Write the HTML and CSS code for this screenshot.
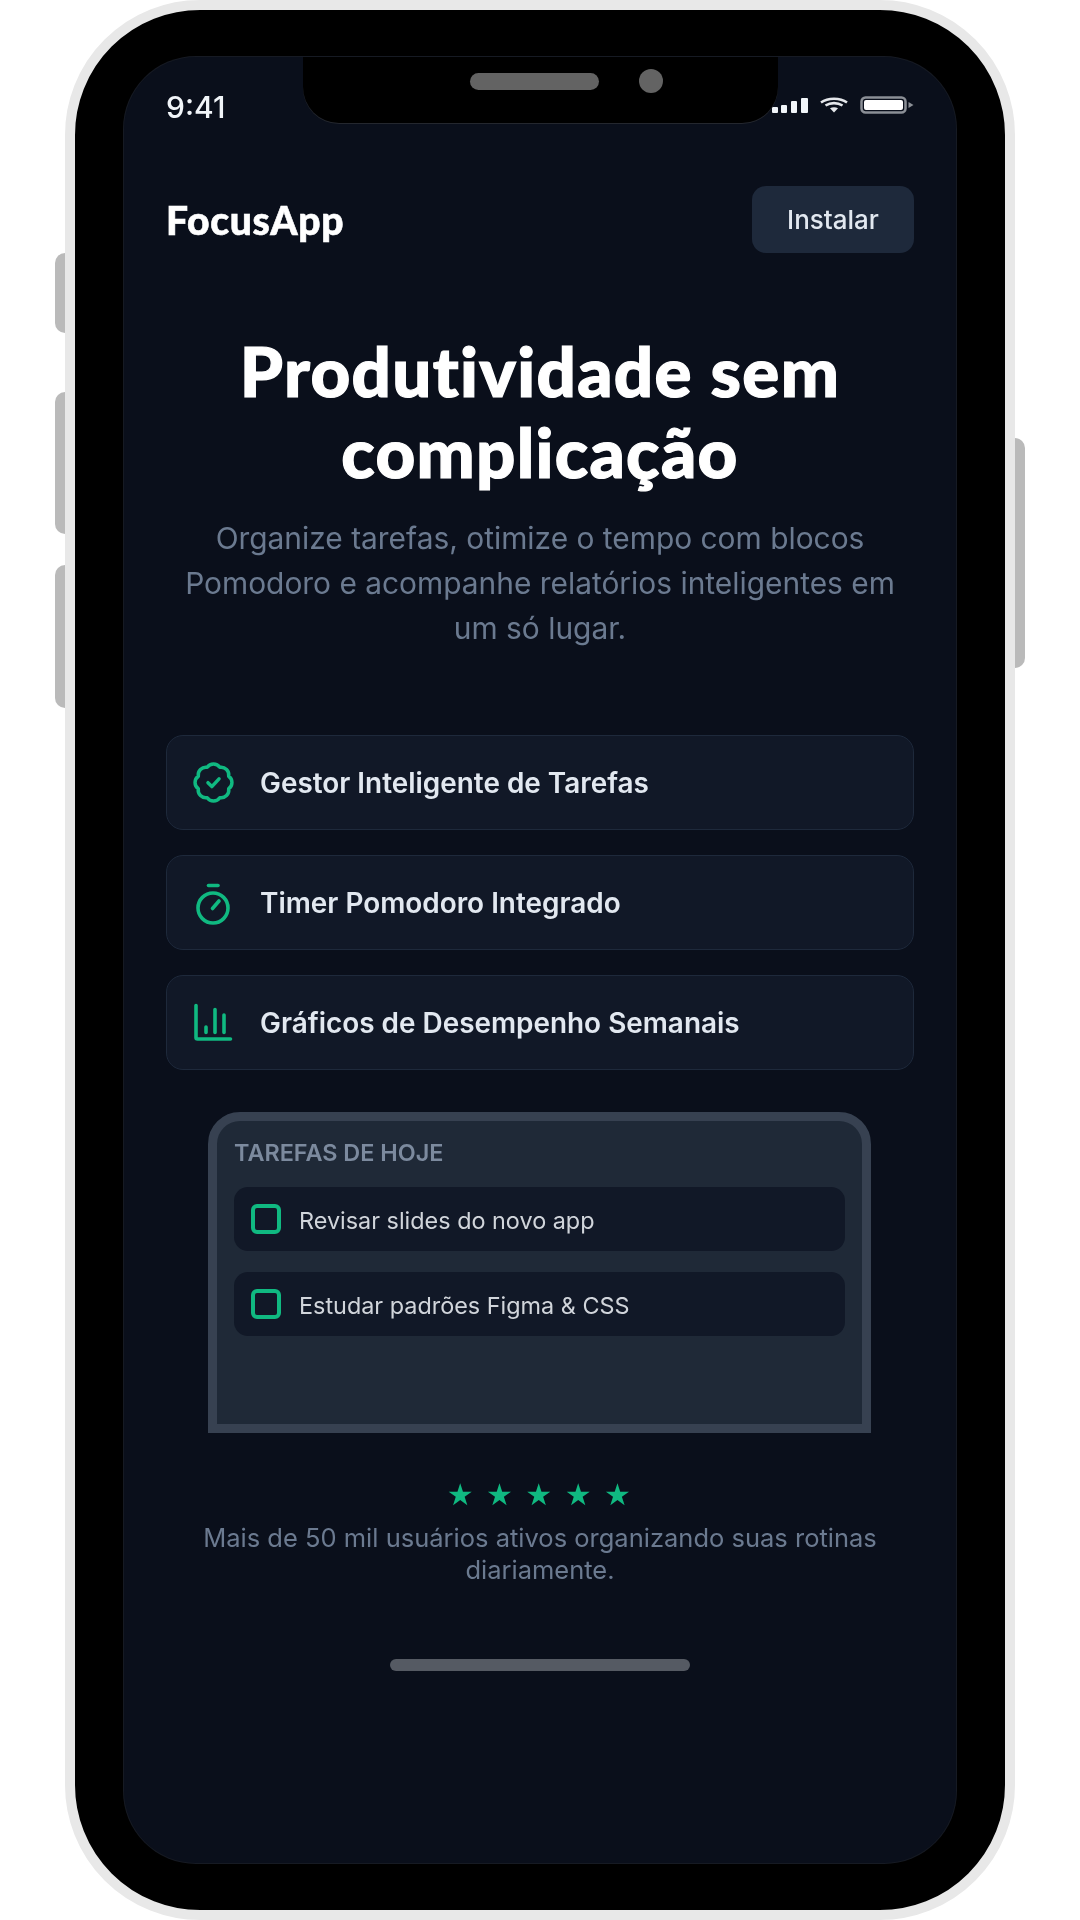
FILE: index.html
```html
<!DOCTYPE html>
<html lang="pt-BR">
<head>
<meta charset="utf-8">
<title>FocusApp</title>
<link rel="stylesheet" href="styles.css">
</head>
<body>
<div class="phone">
  <span class="side side-l1"></span>
  <span class="side side-l2"></span>
  <span class="side side-l3"></span>
  <span class="side side-r1"></span>
  <div class="screen">
    <div class="notch"><span class="speaker"></span><span class="camera"></span></div>
    <div class="content">
      <div class="status">
        <span class="time">9:41</span>
        <div class="status-icons">
          <svg class="sig" width="36" height="15" viewBox="0 0 36 15"><rect x="0" y="9" width="6" height="6" rx="1"/><rect x="9" y="7" width="6" height="8" rx="1"/><rect x="19" y="3" width="6" height="12" rx="1"/><rect x="29" y="0" width="7" height="15" rx="1"/></svg>
          <svg class="wifi" width="28" height="16" viewBox="0 0 28 16"><path d="M1 5.500C8 .5 20 .5 27 5.500M5.500 8.500c5-3.200 12-3.200 17 0" fill="none" stroke="#e5e7eb" stroke-width="2.600"/><path d="M10 11.200c2.400-1.400 5.600-1.400 8 0L14 15.500Z" fill="#e5e7eb"/></svg>
          <svg class="bat" width="54" height="18" viewBox="0 0 54 18"><rect x="1.500" y="1.500" width="44" height="15" rx="4" fill="none" stroke="#8b8f96" stroke-width="2.500"/><rect x="4" y="4" width="39" height="10" rx="2" fill="#fff"/><path d="M48.500 6l5 3-5 3z" fill="#8b8f96"/></svg>
        </div>
      </div>
      <header class="top">
        <span class="logo">FocusApp</span>
        <span class="install">Instalar</span>
      </header>
      <h1 class="title">Produtividade sem complicação</h1>
      <p class="lead">Organize tarefas, otimize o tempo com blocos Pomodoro e acompanhe relatórios inteligentes em um só lugar.</p>
      <div class="features">
        <div class="feature">
          <span class="ico-box"><svg width="41" height="41" viewBox="2 2 20 20" fill="none" stroke="#10b981" stroke-width="1.700" stroke-linecap="round" stroke-linejoin="round"><path d="M9.300 12.100 11.200 14 14.700 10.200"/><path d="M21 12c0 1.268-.63 2.39-1.593 3.068a3.745 3.745 0 0 1-1.043 3.296 3.745 3.745 0 0 1-3.296 1.043A3.745 3.745 0 0 1 12 21c-1.268 0-2.39-.63-3.068-1.593a3.746 3.746 0 0 1-3.296-1.043 3.745 3.745 0 0 1-1.043-3.296A3.745 3.745 0 0 1 3 12c0-1.268.63-2.39 1.593-3.068a3.745 3.745 0 0 1 1.043-3.296 3.746 3.746 0 0 1 3.296-1.043A3.746 3.746 0 0 1 12 3c1.268 0 2.39.63 3.068 1.593a3.746 3.746 0 0 1 3.296 1.043 3.746 3.746 0 0 1 1.043 3.296A3.745 3.745 0 0 1 21 12Z"/></svg></span>
          <span>Gestor Inteligente de Tarefas</span>
        </div>
        <div class="feature">
          <span class="ico-box"><svg width="44" height="44" viewBox="0 0 44 44" fill="none" stroke="#10b981" stroke-width="3.600" stroke-linecap="round"><path d="M17.500 4.500H27"/><circle cx="22" cy="27" r="15"/><path d="M21.500 27.500 28 20"/></svg></span>
          <span>Timer Pomodoro Integrado</span>
        </div>
        <div class="feature">
          <span class="ico-box"><svg width="44" height="44" viewBox="0 0 44 44" fill="none" stroke="#10b981" stroke-width="3.600" stroke-linecap="round" stroke-linejoin="round"><path d="M5 4.500V36.500a1.500 1.500 0 0 0 1.500 1.500H39.500"/><path d="M15 26V31.500M24 8.500V31.500M33 14V31.500"/></svg></span>
          <span>Gráficos de Desempenho Semanais</span>
        </div>
      </div>
      <section class="preview">
        <div class="preview-title">TAREFAS DE HOJE</div>
        <div class="task"><span class="check"></span><span>Revisar slides do novo app</span></div>
        <div class="task"><span class="check"></span><span>Estudar padrões Figma &amp; CSS</span></div>
      </section>
      <div class="stars">★★★★★</div>
      <p class="social">Mais de 50 mil usuários ativos organizando suas rotinas diariamente.</p>
      <div class="home"></div>
    </div>
  </div>
</div>
</body>
</html>
```
FILE: styles.css
```css
* { box-sizing: border-box; }
html, body { margin: 0; padding: 0; background: #fff; }
body { width: 1080px; height: 1920px; overflow: hidden; font-family: Inter, "Liberation Sans", sans-serif; }

.phone {
  position: relative;
  width: 950px;
  height: 1920px;
  margin: 0 auto;
  padding: 47px 49px;
  background: #000;
  border: 10px solid #e8e8e8;
  border-radius: 135px;
}
.side { position: absolute; width: 10px; background: #bababa; }
.side-l1 { left: -20px; top: 243px; height: 80px; border-radius: 10px 0 0 10px; }
.side-l2 { left: -20px; top: 382px; height: 142px; border-radius: 10px 0 0 10px; }
.side-l3 { left: -20px; top: 555px; height: 143px; border-radius: 10px 0 0 10px; }
.side-r1 { right: -20px; top: 428px; height: 230px; border-radius: 0 10px 10px 0; }

.screen {
  position: relative;
  height: 1806px;
  background: #0a0f1b;
  border-radius: 72px;
  box-shadow: 0 0 0 1px #161a23;
  overflow: hidden;
}
.notch {
  position: absolute;
  left: 179px;
  top: 0;
  width: 475px;
  height: 66px;
  background: #000;
  border-radius: 0 0 36px 36px;
  box-shadow: 0 1px 0 #24272e;
  z-index: 2;
}
.speaker { position: absolute; left: 167px; top: 16px; width: 129px; height: 17px; border-radius: 9px; background: #636363; }
.camera { position: absolute; left: 336px; top: 12px; width: 24px; height: 24px; border-radius: 50%; background: #636363; }

.content { padding: 0 42px; filter: blur(0.7px); }

.status { height: 100px; display: flex; align-items: center; justify-content: space-between; }
.time { font-size: 30px; font-weight: 500; color: #f1f5f9; }
.status-icons { display: flex; align-items: center; gap: 12px; margin-top: -4px; }
.sig { fill: #f1f5f9; }

.top { margin-top: 29px; height: 67px; display: flex; align-items: center; justify-content: space-between; }
.logo {
  font-family: Lato, sans-serif; font-weight: 900; font-size: 39px; color: #fff;
  font-variant-ligatures: none; -webkit-text-stroke: 0.6px #fff; letter-spacing: 0.7px;
}
.install {
  width: 162px; height: 67px; display: flex; align-items: center; justify-content: center;
  background: #1e293b; border-radius: 14px; font-size: 26px; font-weight: 500; color: #e2e8f0;
}

.title {
  margin: 77px 0 0;
  font-family: Lato, sans-serif; font-weight: 900; font-size: 69px; line-height: 81px;
  text-align: center; color: #fff; font-variant-ligatures: none;
  letter-spacing: 1.300px; -webkit-text-stroke: 1.2px #fff;
}
.lead { margin: 24px 0 0; font-size: 29.9px; line-height: 45px; color: #6b7a90; text-align: center; }

.features { margin-top: 84px; display: flex; flex-direction: column; gap: 25px; }
.feature {
  height: 95px; display: flex; align-items: center; gap: 25px; padding-left: 24px;
  background: #111827; border: 1.5px solid #1e293b; border-radius: 17px;
  font-size: 27.9px; font-weight: 600; color: #e2e8f0;
}
.ico-box { flex: none; width: 44px; height: 44px; display: flex; align-items: center; justify-content: center; }

.preview {
  margin: 42px 43px 0 42px; height: 321px;
  padding: 18px 17px 0 17px;
  background: #1f2937;
  border: 9px solid #374151;
  border-radius: 32px 32px 0 0;
}
.preview-title { font-size: 23.4px; font-weight: 600; color: #7c8a9e; line-height: 28px; margin-bottom: 20px; }
.task {
  height: 64px; display: flex; align-items: center; gap: 18px; padding: 2px 0 0 17px;
  background: #111827; border-radius: 14px; font-size: 23.4px; color: #d1d5db;
}
.task + .task { margin-top: 21px; }
.check { flex: none; width: 30px; height: 30px; margin-top: -2px; border: 4px solid #10b981; border-radius: 6px; }

.stars {
  margin-top: 45px; font-family: "DejaVu Sans", sans-serif; font-size: 30px; line-height: 34px;
  letter-spacing: 12.400px; color: #10b981; text-align: center; padding-left: 10px;
}
.social { margin: 10px 0 0; font-size: 25.5px; line-height: 32px; color: #6b7a90; text-align: center; }
.home { margin: 73px auto 0; width: 300px; height: 12px; border-radius: 6px; background: #555a63; }
```
